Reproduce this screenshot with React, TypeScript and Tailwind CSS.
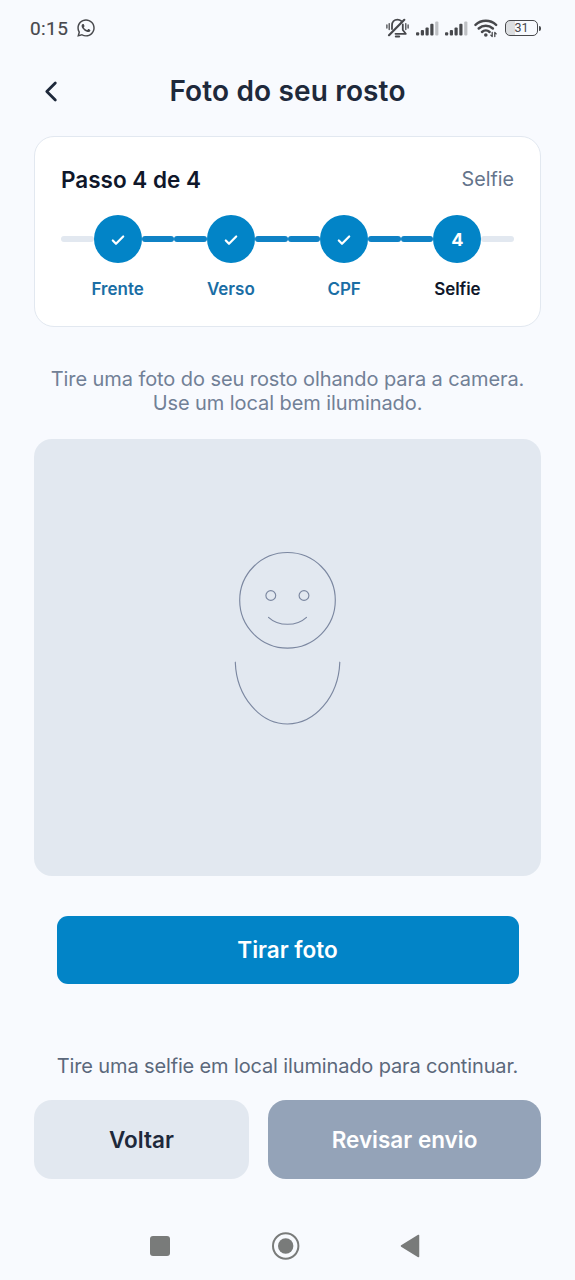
import { FaWhatsapp } from "react-icons/fa";

const steps = [
  { id: 1, label: "Frente", done: true },
  { id: 2, label: "Verso", done: true },
  { id: 3, label: "CPF", done: true },
  { id: 4, label: "Selfie", done: false },
];

function SignalIcon() {
  return (
    <svg width="23" height="15" viewBox="0 0 23 15" fill="#47484c">
      <rect x="0" y="11.2" width="3.2" height="3.3" rx="1" />
      <rect x="4.8" y="9" width="3.2" height="5.500" rx="1" />
      <rect x="9.500" y="6.500" width="3.2" height="8" rx="1" />
      <rect x="14.300" y="2.800" width="3.2" height="11.700" rx="1" />
      <rect x="19.200" y="0.500" width="3.2" height="14" rx="1" fill="#bfc1c5" />
    </svg>
  );
}

function MutedBellIcon() {
  return (
    <svg
      width="23"
      height="20"
      viewBox="0 0 23 20"
      fill="none"
      stroke="#47484c"
      strokeWidth="1.800"
      strokeLinecap="round"
      strokeLinejoin="round"
    >
      <path d="M6 11V7.500C6 4 8.300 1.600 11.500 1.600c1.400 0 2.700.5 3.600 1.300" />
      <path d="M16.800 6.500v5.500l3 3.800H9.500" />
      <path d="M3 17.200 18.300 1.800" strokeWidth="2.200" />
      <path d="M9.800 18.500h3.400" strokeWidth="2" />
      <path d="M.9 7v3M3.200 5.600v6M19.800 5.600v6M22.100 7v3" strokeWidth="1.300" />
    </svg>
  );
}

function WifiIcon() {
  return (
    <svg
      width="24"
      height="19"
      viewBox="0 0 24 19"
      fill="none"
      stroke="#47484c"
      strokeWidth="2.500"
      strokeLinecap="round"
    >
      <path d="M1.500 5.800C7.300.4 16.300.4 22.100 5.800" />
      <path d="M4.700 9.500C8.900 5.800 14.700 5.800 18.900 9.500" />
      <path d="M8 13C10.100 11.100 13.500 11.100 15.600 13" />
      <circle cx="11.800" cy="16" r="1.800" fill="#47484c" stroke="none" />
      <path
        d="M18.200 13.500v4M18.200 17.500l-1.400-1.400M20.800 17.500v-4M20.800 13.500l1.400 1.400"
        strokeWidth="1.300"
      />
    </svg>
  );
}

function StatusBar() {
  return (
    <div className="flex h-14 items-center pl-[30px] pr-[34px] text-[#47484c]">
      <span className="w-[38px] whitespace-nowrap font-[Roboto] text-[19px] leading-none tracking-[0.4px] [-webkit-text-stroke:0.2px_#47484c]">
        0:15
      </span>
      <FaWhatsapp className="ml-[8px] size-[20px]" />
      <div className="ml-auto flex items-center">
        <MutedBellIcon />
        <div className="ml-[7px]">
          <SignalIcon />
        </div>
        <div className="ml-[6px]">
          <SignalIcon />
        </div>
        <div className="ml-[6px]">
          <WifiIcon />
        </div>
        <div className="ml-[7px] flex h-[16px] w-[33px] items-center justify-center rounded-[5px] border-[1.5px] border-[#47484c] bg-linear-to-r from-[#dcdee1] from-30% to-transparent to-30% font-[Roboto] text-[12.500px] leading-none">
          31
        </div>
        <div className="ml-px h-[5px] w-[2px] rounded-r bg-[#47484c]" />
      </div>
    </div>
  );
}

function Stepper() {
  return (
    <div className="mt-[21px] grid grid-cols-4">
      {steps.map((step, index) => (
        <div key={step.id} className="flex flex-col items-center">
          <div className="flex w-full items-center">
            <div
              className={
                index === 0
                  ? "h-[5.500px] flex-1 rounded-full bg-[#e2e8f0]"
                  : "h-[5.500px] flex-1 rounded-full bg-[#0f82c5]"
              }
            />
            <div className="flex size-12 items-center justify-center rounded-full bg-[#0284c7] text-[18px] font-bold text-white">
              {step.done ? (
                <svg
                  width="14"
                  height="12"
                  viewBox="0 0 14 12"
                  fill="none"
                  stroke="white"
                  strokeWidth="2.200"
                  strokeLinecap="round"
                  strokeLinejoin="round"
                  className="mt-px"
                >
                  <path d="M1.800 6.500 5 9.800 12.200 2.500" />
                </svg>
              ) : (
                step.id
              )}
            </div>
            <div
              className={
                index === steps.length - 1
                  ? "h-[5.500px] flex-1 rounded-full bg-[#e2e8f0]"
                  : "h-[5.500px] flex-1 rounded-full bg-[#0f82c5]"
              }
            />
          </div>
          <span
            className={
              step.done
                ? "mt-[15px] text-[17px] font-semibold leading-[22px] text-[#1a6ea5]"
                : "mt-[15px] text-[17px] font-semibold leading-[22px] tracking-[-0.1px] text-[#0f172a]"
            }
          >
            {step.label}
          </span>
        </div>
      ))}
    </div>
  );
}

function FaceGuide() {
  return (
    <svg
      width="110"
      height="176"
      viewBox="0 0 110 176"
      fill="none"
      stroke="#7b87a0"
      strokeWidth="1.150"
      strokeLinecap="round"
    >
      <circle cx="54.500" cy="50.300" r="47.800" />
      <circle cx="37.800" cy="45.500" r="4.900" />
      <circle cx="71" cy="45.500" r="4.900" />
      <path d="M35.500 67.300C45.500 76.600 63.500 76.600 73.500 67.300" />
      <path d="M2.300 112.200C3.500 147.200 27.500 174 54.500 174S105.500 147.200 106.800 112.200" />
    </svg>
  );
}

function NavigationBar() {
  return (
    <div className="mt-[48px] flex h-[38px] items-center pl-[150px] text-[#797b7a]">
      <div className="size-[20px] rounded-[3px] bg-[#797b7a]" />
      <svg width="28" height="28" viewBox="0 0 28 28" className="ml-[102px]">
        <circle cx="13.700" cy="14" r="12.700" fill="none" stroke="currentColor" strokeWidth="2" />
        <circle cx="13.700" cy="14" r="7.700" fill="currentColor" />
      </svg>
      <svg width="20" height="24" viewBox="0 0 20 24" className="ml-[100px]">
        <path
          d="M1.500 12 18.500 1.500v21z"
          fill="currentColor"
          stroke="currentColor"
          strokeWidth="1.500"
          strokeLinejoin="round"
        />
      </svg>
    </div>
  );
}

export default function App() {
  return (
    <div className="flex h-[1280px] w-[575px] flex-col overflow-hidden bg-[#f8fafe] font-[Inter,sans-serif]">
      <StatusBar />

      {/* Title bar */}
      <header className="grid h-[70px] grid-cols-[60px_1fr_60px] items-center px-[34px]">
        <button type="button" aria-label="Voltar" className="pl-[10px]">
          <svg
            width="14"
            height="22"
            viewBox="0 0 14 22"
            fill="none"
            stroke="#1e293b"
            strokeWidth="2.800"
            strokeLinecap="round"
            strokeLinejoin="round"
          >
            <path d="M11.300 3 2.800 11.500 11.300 20" />
          </svg>
        </button>
        <h1 className="text-center text-[28px] font-semibold leading-9 tracking-[0.15px] text-[#1e293b]">
          Foto do seu rosto
        </h1>
      </header>

      <main className="px-[34px] pt-[10px]">
        <section className="h-[191px] rounded-[20px] border border-[#e2e8f0] bg-white px-[26px] pt-[28px]">
          <div className="flex h-[29px] items-center justify-between">
            <span className="text-[22.500px] font-semibold text-[#0f172a]">Passo 4 de 4</span>
            <span className="text-[19.700px] text-[#64748b]">Selfie</span>
          </div>
          <Stepper />
        </section>

        <p className="mt-[40px] whitespace-nowrap text-center text-[20px] leading-[24px] tracking-[-0.08px] text-[#718096]">
          Tire uma foto do seu rosto olhando para a camera.
          <br />
          Use um local bem iluminado.
        </p>

        {/* Camera preview */}
        <div className="mt-[24px] flex h-[437px] justify-center rounded-[18px] bg-[#e2e8f0] pt-[111px]">
          <FaceGuide />
        </div>

        <div className="px-[22.500px] pt-[40px]">
          <button
            type="button"
            className="h-[67.500px] w-full rounded-[11px] bg-[#0284c7] text-[22.500px] font-semibold text-white"
          >
            Tirar foto
          </button>
        </div>

        <p className="mt-[69.500px] whitespace-nowrap text-center text-[20px] leading-[26px] tracking-[-0.140px] text-[#5b687b]">
          Tire uma selfie em local iluminado para continuar.
        </p>

        <div className="mt-[21px] flex gap-[19px]">
          <button
            type="button"
            className="h-[79px] w-[215px] rounded-[18px] bg-[#e2e8f0] text-[22.500px] font-semibold text-[#1e293b]"
          >
            Voltar
          </button>
          <button
            type="button"
            className="h-[79px] flex-1 rounded-[18px] bg-[#94a3b8] text-[22.500px] font-semibold text-white"
          >
            Revisar envio
          </button>
        </div>
      </main>

      <NavigationBar />
    </div>
  );
}
